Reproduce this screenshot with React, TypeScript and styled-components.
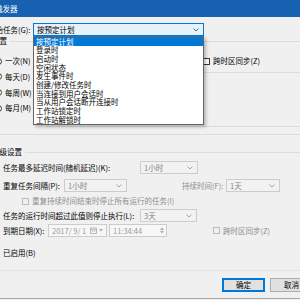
import React from 'react';
import styled, { createGlobalStyle } from 'styled-components';

const GlobalStyle = createGlobalStyle`
  html, body {
    margin: 0;
    padding: 0;
    background: #f0f0f0;
    overflow: hidden;
  }
  body {
    font-family: "Noto Sans CJK SC", "Microsoft YaHei", sans-serif;
    font-size: 7.5px;
    color: #000;
  }
`;

const Window = styled.div`
  position: relative;
  width: 300px;
  height: 298px;
  overflow: hidden;
  display: flex;
  flex-direction: column;
  background: #f0f0f0;
  border-bottom: 1px solid #a8a8a8;
  white-space: nowrap;
`;

const TitleBar = styled.div`
  flex: none;
  height: 17px;
  background: #1762b0;
  color: #fff;
  display: flex;
  align-items: center;
`;

const Title = styled.span`
  margin-left: -20px;
`;

const Row = styled.div<{ $h: number; $top: number }>`
  flex: none;
  display: flex;
  align-items: center;
  height: ${p => p.$h}px;
  margin-top: ${p => p.$top}px;
`;

const Label = styled.span<{ $x?: number; $w?: number; $muted?: boolean }>`
  flex: none;
  margin-left: ${p => p.$x ?? 0}px;
  width: ${p => (p.$w ? `${p.$w}px` : 'auto')};
  color: ${p => (p.$muted ? '#8d8d8d' : '#000')};
  line-height: 1;
`;

const Combo = styled.div<{ $w: number; $x?: number; $active?: boolean }>`
  flex: none;
  position: relative;
  box-sizing: border-box;
  width: ${p => p.$w}px;
  height: 100%;
  margin-left: ${p => p.$x ?? 0}px;
  display: flex;
  align-items: center;
  padding-left: 3px;
  border: 1px solid ${p => (p.$active ? '#0078d7' : '#cccccc')};
  background: ${p => (p.$active ? '#e5f1fb' : '#f2f2f2')};
  color: ${p => (p.$active ? '#000' : '#838383')};
  line-height: 1;
`;

const Chevron = styled.svg`
  position: absolute;
  right: 4px;
  top: 50%;
  margin-top: -1.5px;
`;

const DropList = styled.ul`
  position: absolute;
  left: 33px;
  top: 36px;
  width: 171px;
  margin: 0;
  padding: 0;
  list-style: none;
  box-sizing: border-box;
  border: 1px solid #646464;
  background: #fff;
  box-shadow: 2px 2px 3px rgba(0, 0, 0, 0.25);
  z-index: 5;
`;

const DropItem = styled.li<{ $selected?: boolean }>`
  height: 8.7px;
  display: flex;
  align-items: center;
  padding-left: 2px;
  line-height: 1;
  background: ${p => (p.$selected ? '#0078d7' : 'transparent')};
  color: ${p => (p.$selected ? '#fff' : '#000')};
`;

const Caption = styled.div<{ $top: number }>`
  flex: none;
  display: flex;
  align-items: center;
  height: 8px;
  margin-top: ${p => p.$top}px;
`;

const CaptionLine = styled.div`
  flex: 1;
  height: 1px;
  margin-left: 3px;
  background: #dcdcdc;
`;

const SettingsBody = styled.div`
  flex: none;
  display: flex;
  height: 90px;
  border-bottom: 1px solid #dcdcdc;
  box-sizing: border-box;
`;

const RadioColumn = styled.div`
  flex: none;
  width: 48px;
  margin-left: -6px;
  margin-bottom: 7px;
  padding-top: 10px;
  box-sizing: border-box;
  border-right: 1px solid #dcdcdc;
  display: flex;
  flex-direction: column;
  gap: 3.7px;
`;

const RadioItem = styled.div`
  height: 12px;
  display: flex;
  align-items: center;
  gap: 3px;
  margin-left: 1px;
  line-height: 1;
`;

const RadioDot = styled.span`
  flex: none;
  width: 7px;
  height: 7px;
  box-sizing: border-box;
  border-radius: 50%;
  border: 1px solid #333;
  background: #fff;
`;

const RightColumn = styled.div`
  flex: 1;
  display: flex;
  flex-direction: column;
  padding-left: 4px;
`;

const StartRow = styled.div`
  flex: none;
  height: 10px;
  margin-top: 11px;
  display: flex;
  align-items: center;
`;

const HLine = styled.div<{ $top: number }>`
  flex: none;
  height: 1px;
  margin-top: ${p => p.$top}px;
  background: #dcdcdc;
`;

const Panel = styled.div`
  flex: 1;
  margin-top: 3px;
  margin-bottom: 7px;
  margin-right: -20px;
  border: 1px solid #dcdcdc;
  border-top: none;
`;

const Check = styled.label<{ $x?: number; $muted?: boolean }>`
  flex: none;
  display: flex;
  align-items: center;
  gap: 3px;
  margin-left: ${p => p.$x ?? 0}px;
  color: ${p => (p.$muted ? '#8d8d8d' : '#000')};
  line-height: 1;
`;

const CheckBox = styled.span<{ $muted?: boolean }>`
  flex: none;
  width: 7px;
  height: 7px;
  box-sizing: border-box;
  border: 1px solid ${p => (p.$muted ? '#bcbcbc' : '#333')};
  background: ${p => (p.$muted ? '#f0f0f0' : '#fff')};
`;

const DateBox = styled.div<{ $w: number; $x?: number }>`
  flex: none;
  position: relative;
  box-sizing: border-box;
  width: ${p => p.$w}px;
  height: 100%;
  margin-left: ${p => p.$x ?? 0}px;
  display: flex;
  align-items: center;
  padding-left: 3px;
  border: 1px solid #cccccc;
  background: #f7f7f7;
  color: #9a9a9a;
  line-height: 1;
`;

const PickerIcons = styled.div`
  position: absolute;
  right: 3px;
  top: 0;
  bottom: 0;
  display: flex;
  align-items: center;
  gap: 2px;
`;

const Spinner = styled.div`
  position: absolute;
  right: 1px;
  top: 1px;
  bottom: 1px;
  width: 6px;
  display: flex;
  flex-direction: column;
  justify-content: space-around;
  align-items: center;
`;

const Footer = styled.div`
  flex: none;
  margin-top: 12px;
  margin-right: -13px;
  padding-top: 7px;
  border-top: 1px solid #e3e3e3;
  display: flex;
  justify-content: flex-end;
  gap: 5px;
`;

const Button = styled.button<{ $primary?: boolean }>`
  width: 43px;
  height: 14px;
  padding: 0;
  font: inherit;
  line-height: 1;
  color: #000;
  background: #e1e1e1;
  border: 1px solid ${p => (p.$primary ? '#0078d7' : '#adadad')};
  box-shadow: ${p => (p.$primary ? 'inset 0 0 0 1px #0078d7' : 'none')};
`;

const ChevronIcon = ({ color }: { color: string }) => (
  <Chevron width="6" height="4" viewBox="0 0 6 4">
    <polyline points="0.5,0.5 3,3 5.5,0.5" fill="none" stroke={color} strokeWidth="0.9" />
  </Chevron>
);

const triggers = [
  '按预定计划',
  '登录时',
  '启动时',
  '空闲状态',
  '发生事件时',
  '创建/修改任务时',
  '当连接到用户会话时',
  '当从用户会话断开连接时',
  '工作站锁定时',
  '工作站解锁时',
];

const radios = ['一次(N)', '每天(D)', '每周(W)', '每月(M)'];

const App = () => (
  <Window>
    <GlobalStyle />
    <TitleBar>
      <Title>新建触发器</Title>
    </TitleBar>

    <Row $h={13} $top={6}>
      <Label $x={-12} $w={45}>开始任务(G):</Label>
      <Combo $w={171} $active>
        按预定计划
        <ChevronIcon color="#555" />
      </Combo>
    </Row>

    <Caption $top={1}>
      <Label $x={-8}>设置</Label>
      <CaptionLine />
    </Caption>
    <SettingsBody>
      <RadioColumn>
        {radios.map(r => (
          <RadioItem key={r}>
            <RadioDot />
            {r}
          </RadioItem>
        ))}
      </RadioColumn>
      <RightColumn>
        {/* start date/time sit under the open list; only the checkbox shows */}
        <StartRow>
          <Check $x={157}>
            <CheckBox />
            跨时区同步(Z)
          </Check>
        </StartRow>
        <HLine $top={6} />
        <Panel />
      </RightColumn>
    </SettingsBody>

    <Caption $top={13}>
      <Label $x={-8}>高级设置</Label>
      <CaptionLine />
    </Caption>

    <Row $h={13} $top={5}>
      <Label $x={3} $w={137}>任务最多延迟时间(随机延迟)(K):</Label>
      <Combo $w={58}>
        1小时
        <ChevronIcon color="#9a9a9a" />
      </Combo>
    </Row>
    <Row $h={13} $top={5}>
      <Label $x={3} $w={61}>重复任务间隔(P):</Label>
      <Combo $w={63}>
        1小时
        <ChevronIcon color="#9a9a9a" />
      </Combo>
      <Label $x={55} $w={44} $muted>持续时间(F):</Label>
      <Combo $w={54}>
        1天
        <ChevronIcon color="#9a9a9a" />
      </Combo>
    </Row>
    <Row $h={10} $top={4}>
      <Check $x={22} $muted>
        <CheckBox $muted />
        重复持续时间结束时停止所有运行的任务(I)
      </Check>
    </Row>
    <Row $h={13} $top={3}>
      <Label $x={3} $w={137}>任务的运行时间超过此值则停止执行(L):</Label>
      <Combo $w={57}>
        3天
        <ChevronIcon color="#9a9a9a" />
      </Combo>
    </Row>
    <Row $h={13} $top={2}>
      <Label $x={3} $w={45}>到期日期(X):</Label>
      <DateBox $w={59}>
        2017/ 9/ 1
        <PickerIcons>
          <svg width="7" height="7" viewBox="0 0 7 7">
            <rect x="0.5" y="1" width="6" height="5.5" fill="none" stroke="#a8a8a8" strokeWidth="0.8" />
            <line x1="0.5" y1="2.6" x2="6.5" y2="2.6" stroke="#a8a8a8" strokeWidth="0.8" />
            <rect x="2" y="3.6" width="1.2" height="1" fill="#a8a8a8" />
            <rect x="4" y="3.6" width="1.2" height="1" fill="#a8a8a8" />
          </svg>
          <svg width="4" height="3" viewBox="0 0 4 3">
            <polygon points="0,0 4,0 2,2.5" fill="#a8a8a8" />
          </svg>
        </PickerIcons>
      </DateBox>
      <DateBox $w={58} $x={2}>
        11:34:44
        <Spinner>
          <svg width="4" height="3" viewBox="0 0 4 3">
            <polygon points="0,3 4,3 2,0.5" fill="#a8a8a8" />
          </svg>
          <svg width="4" height="3" viewBox="0 0 4 3">
            <polygon points="0,0 4,0 2,2.5" fill="#a8a8a8" />
          </svg>
        </Spinner>
      </DateBox>
      <Check $x={46} $muted>
        <CheckBox $muted />
        跨时区同步(Z)
      </Check>
    </Row>
    <Row $h={10} $top={11}>
      <Label $x={3}>已启用(B)</Label>
    </Row>

    <Footer>
      <Button $primary>确定</Button>
      <Button>取消</Button>
    </Footer>

    <DropList>
      {triggers.map((t, i) => (
        <DropItem key={t} $selected={i === 0}>
          {t}
        </DropItem>
      ))}
    </DropList>
  </Window>
);

export default App;
